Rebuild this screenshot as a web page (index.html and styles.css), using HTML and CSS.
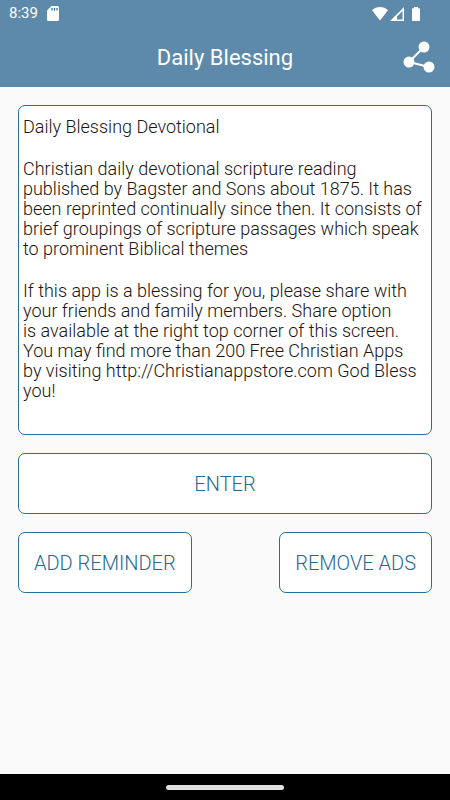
FILE: index.html
```html
<!DOCTYPE html>
<html lang="en">
<head>
    <meta charset="UTF-8">
    <meta name="viewport" content="width=device-width, initial-scale=1.0">
    <title>Daily Blessing</title>
    <link rel="stylesheet" href="styles.css">
</head>
<body>
    <header class="app-header">
        <!-- Status bar -->
        <div class="status-bar">
            <div class="status-left">
                <span class="status-time">8:39</span>
                <svg class="status-icon" width="12" height="15" viewBox="0 0 12 15" aria-hidden="true">
                    <path d="M4.500 0H10.500Q12 0 12 1.500V13.500Q12 15 10.500 15H1.500Q0 15 0 13.500V4.500Z" fill="#fff"/>
                    <path d="M5 2v2.500M7.500 2v2.500M10 2v2.500" stroke="#1d6a95" stroke-width="1.200"/>
                </svg>
            </div>
            <div class="status-right">
                <svg class="wifi-icon" width="16" height="14" viewBox="0 0 16 14" aria-hidden="true">
                    <path d="M0 3.200C4.500-1 11.500-1 16 3.200L8 13.500Z" fill="#fff"/>
                </svg>
                <svg class="signal-icon" width="14" height="14" viewBox="0 0 14 14" aria-hidden="true">
                    <path fill-rule="evenodd" d="M14 0V14H0ZM12.500 4L7 9.500V12.500H12.500Z" fill="#fff"/>
                </svg>
                <svg class="battery-icon" width="8" height="14" viewBox="0 0 8 14" aria-hidden="true">
                    <path d="M2 0h4v1.300H7.200Q8 1.300 8 2.200V13Q8 14 7.200 14H.8Q0 14 0 13V2.200Q0 1.300 .8 1.300H2Z" fill="#fff"/>
                </svg>
            </div>
        </div>

        <!-- Title bar -->
        <div class="title-bar">
            <h1 class="title">Daily Blessing</h1>
            <button class="share-button" type="button" aria-label="Share">
                <svg width="32" height="32" viewBox="0 0 32 32" aria-hidden="true">
                    <path d="M21 6L6 21L26 26" fill="none" stroke="#fff" stroke-width="2"/>
                    <circle cx="21" cy="6" r="5.500" fill="#fff"/>
                    <circle cx="6" cy="21" r="5.500" fill="#fff"/>
                    <circle cx="26" cy="26" r="5.500" fill="#fff"/>
                </svg>
            </button>
        </div>
    </header>

    <main class="content">
        <section class="about">
            <p>Daily Blessing Devotional</p>
            <p>Christian daily devotional scripture reading<br>
            published by Bagster and Sons about 1875. It has<br>
            been reprinted continually since then. It consists of<br>
            brief groupings of scripture passages which speak<br>
            to prominent Biblical themes</p>
            <p>If this app is a blessing for you, please share with<br>
            your friends and family members. Share option<br>
            is available at the right top corner of this screen.<br>
            You may find more than 200 Free Christian Apps<br>
            by visiting http://Christianappstore.com God Bless<br>
            you!</p>
        </section>

        <button class="button" type="button">ENTER</button>

        <div class="button-row">
            <button class="button" type="button">ADD REMINDER</button>
            <button class="button" type="button">REMOVE ADS</button>
        </div>
    </main>

    <!-- Gesture navigation -->
    <footer class="nav-bar">
        <div class="nav-handle"></div>
    </footer>
</body>
</html>
```
FILE: styles.css
```css
* {
    margin: 0;
    padding: 0;
    box-sizing: border-box;
    font-family: Roboto, sans-serif;
}

body {
    min-height: 100vh;
    display: flex;
    flex-direction: column;
    background-color: #fafafa;
}

/* Header */
.app-header {
    background-color: #5d8aaa;
    color: #fff;
}

.status-bar {
    display: flex;
    justify-content: space-between;
    align-items: center;
    height: 27px;
    padding: 0 30px 0 9px;
}

.status-left,
.status-right {
    display: flex;
    align-items: center;
}

.status-left {
    gap: 9px;
}

.status-time {
    font-size: 15px;
    line-height: 27px;
}

.status-right {
    gap: 2px;
}

.battery-icon {
    margin-left: 6px;
}

.title-bar {
    display: grid;
    grid-template-columns: 32px 1fr 32px;
    align-items: center;
    height: 60px;
    padding: 0 15px;
}

.title {
    grid-column: 2;
    text-align: center;
    font-size: 22px;
    font-weight: 400;
}

.share-button {
    display: flex;
    background: none;
    border: none;
    cursor: pointer;
}

/* Content */
.content {
    flex: 1;
    display: flex;
    flex-direction: column;
    gap: 18px;
    padding: 18px;
}

.about {
    padding: 11px 4px 33px;
    background-color: #fff;
    border: 1px solid #25709b;
    border-radius: 7px;
    font-size: 18px;
    font-weight: 350;
    line-height: 20px;
    color: #21140f;
    white-space: nowrap;
}

.about p + p {
    margin-top: 22px;
}

.button {
    height: 61px;
    padding: 0 15px;
    background-color: #fff;
    border: 1px solid #25709b;
    border-radius: 7px;
    font-size: 20px;
    font-weight: 350;
    color: #1f6a96;
    cursor: pointer;
}

.button-row {
    display: flex;
    justify-content: space-between;
}

/* Navigation bar */
.nav-bar {
    display: flex;
    align-items: center;
    justify-content: center;
    height: 26px;
    background-color: #000;
}

.nav-handle {
    width: 118px;
    height: 5px;
    border-radius: 3px;
    background-color: #e0e0e0;
}
```
